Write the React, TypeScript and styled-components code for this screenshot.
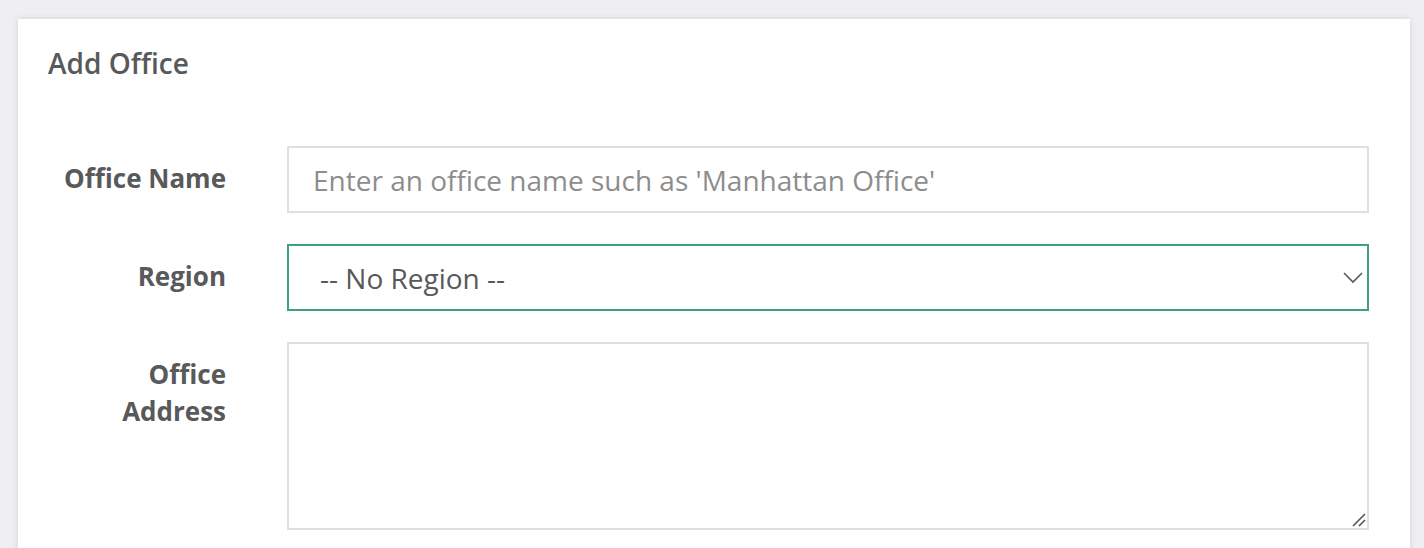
import styled, { createGlobalStyle } from 'styled-components';

const GlobalStyle = createGlobalStyle`
  html, body {
    margin: 0;
    padding: 0;
    background: #efeff1;
    font-family: "Open Sans", "Liberation Sans", sans-serif;
    color: #58595b;
  }
`;

const Page = styled.div`
  padding: 19px 14px 0 18px;
  height: 548px;
  box-sizing: border-box;
  overflow: hidden;
`;

const Card = styled.section`
  background: #ffffff;
  box-shadow: 0 0 6px rgba(0, 0, 0, 0.12);
  padding: 25px 41px 40px 30px;
  min-height: 600px;
`;

const Title = styled.h2`
  margin: 0;
  font-size: 28px;
  line-height: 38px;
  font-weight: 600;
  color: #58595b;
`;

const Form = styled.form`
  display: grid;
  grid-template-columns: 178px 1fr;
  column-gap: 61px;
  row-gap: 31px;
  margin-top: 64px;
`;

const Label = styled.label`
  font-size: 26px;
  font-weight: 700;
  line-height: 37px;
  text-align: right;
  padding-top: 14px;
  color: #58595b;
`;

const fieldBase = `
  box-sizing: border-box;
  width: 100%;
  border: 2px solid #e0e0e0;
  background: #ffffff;
  font-family: "Open Sans", "Liberation Sans", sans-serif;
  font-size: 28px;
  color: #58595b;
  outline: none;
  border-radius: 0;
`;

const TextInput = styled.input`
  ${fieldBase}
  height: 67px;
  padding: 0 24px;
  &::placeholder {
    color: #8d8d8d;
  }
`;

const FieldWrap = styled.div`
  position: relative;
`;

const Select = styled.select<{ $active?: boolean }>`
  ${fieldBase}
  height: 67px;
  padding: 0 60px 0 31px;
  appearance: none;
  border-color: ${(p) => (p.$active ? '#3f9e87' : '#e0e0e0')};
`;

const Chevron = styled.svg`
  position: absolute;
  right: 5px;
  top: 26px;
  pointer-events: none;
`;

const TextArea = styled.textarea`
  ${fieldBase}
  display: block;
  height: 188px;
  padding: 12px 24px;
  resize: none;
`;

const ResizeGrip = styled.svg`
  position: absolute;
  right: 3px;
  bottom: 3px;
  pointer-events: none;
`;

export default function App() {
  return (
    <>
      <GlobalStyle />
      <Page>
        <Card>
          <Title>Add Office</Title>
          <Form>
            <Label htmlFor="office-name">Office Name</Label>
            <TextInput
              id="office-name"
              placeholder="Enter an office name such as 'Manhattan Office'"
            />
            <Label htmlFor="region">Region</Label>
            <FieldWrap>
              <Select id="region" $active defaultValue="">
                <option value="">-- No Region --</option>
              </Select>
              <Chevron width="22" height="16" viewBox="0 0 22 16">
                <path d="M2 3 L11 12 L20 3" fill="none" stroke="#5a5a5a" strokeWidth="1.6" />
              </Chevron>
            </FieldWrap>
            <Label htmlFor="office-address">
              Office
              <br />
              Address
            </Label>
            <FieldWrap>
              <TextArea id="office-address" />
              <ResizeGrip width="14" height="14" viewBox="0 0 14 14">
                <path d="M13 1 L1 13 M13 7 L7 13" stroke="#555" strokeWidth="1.6" />
              </ResizeGrip>
            </FieldWrap>
          </Form>
        </Card>
      </Page>
    </>
  );
}
